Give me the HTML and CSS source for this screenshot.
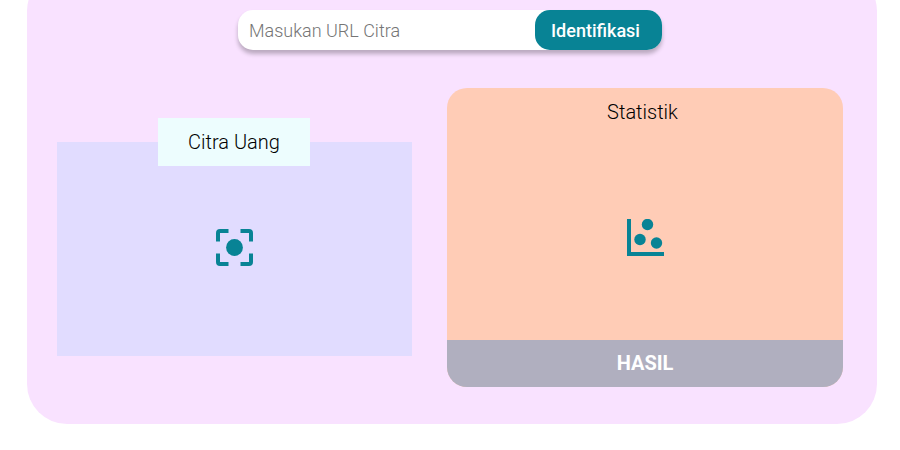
FILE: index.html
```html
<!DOCTYPE html>
<html lang="id">
<head>
<meta charset="utf-8">
<title>Identifikasi Citra Uang</title>
<link rel="stylesheet" href="styles.css">
</head>
<body>
<main class="panel">
  <form class="search">
    <input class="search-input" type="text" placeholder="Masukan URL Citra">
    <button class="search-button" type="button">Identifikasi</button>
  </form>
  <div class="content">
    <section class="image-card">
      <h2 class="image-title">Citra Uang</h2>
      <svg class="icon" viewBox="0 0 37 37"><path d="M0 12.5V4a4 4 0 0 1 4-4h8.5v4H4v8.5zM24.5 0H33a4 4 0 0 1 4 4v8.5h-4V4h-8.5zM0 24.5h4V33h8.5v4H4a4 4 0 0 1-4-4zM33 24.5h4V33a4 4 0 0 1-4 4h-8.5v-4H33z"/><circle cx="18.5" cy="18.5" r="8.4"/></svg>
    </section>
    <section class="stats-card">
      <h2 class="stats-title">Statistik</h2>
      <div class="stats-body">
        <svg class="icon" viewBox="0 0 37 37"><path d="M0 0h4v33h33v4H0z"/><circle cx="20.5" cy="5.5" r="5.7"/><circle cx="13" cy="20.5" r="5.7"/><circle cx="29.5" cy="24" r="5.7"/></svg>
      </div>
      <div class="result">HASIL</div>
    </section>
  </div>
</main>
</body>
</html>
```
FILE: styles.css
```css
* { box-sizing: border-box; }
body { display: flow-root; margin: 0; height: 450px; overflow: hidden; background: #fff; font-family: Roboto, sans-serif; }
.panel { width: 850px; height: 453px; margin: -29px 0 0 27px; padding: 39px 34px 37px 30px; background: #f9e2ff; border-radius: 40px; }
.search { display: flex; width: 424px; height: 40px; margin: 0 0 38px 181px; background: #fff; border-radius: 15px; box-shadow: 0 4px 4px rgba(0,0,0,.25); }
.search-input { flex: 1; min-width: 0; padding: 0 11px; border: 0; background: none; font: 300 18px Roboto, sans-serif; }
.search-input::placeholder { color: #757575; }
.search-button { width: 127px; padding: 0; padding-right: 6px; border: 0; border-radius: 15px; background: #088395; color: #fff; font: 500 18px Roboto, sans-serif; }
.content { display: flex; justify-content: space-between; align-items: flex-start; }
.image-card { display: flex; flex-direction: column; align-items: center; width: 355px; height: 214px; margin-top: 54px; background: #e1dcff; }
.image-title { width: 152px; height: 48px; margin: -24px 1px 63px 0; background: #edfdfe; font-size: 20px; font-weight: 300; line-height: 48px; text-align: center; }
.icon { display: block; width: 37px; height: 37px; fill: #088395; }
.stats-card { display: flex; flex-direction: column; width: 396px; height: 299px; overflow: hidden; border-radius: 20px; background: #ffccb6; }
.stats-title { height: 48px; margin: 0; padding-right: 5px; font-size: 20px; font-weight: 300; line-height: 48px; text-align: center; }
.stats-body { display: flex; flex: 1; justify-content: center; padding-top: 83px; }
.result { height: 47px; background: #b0afbf; color: #fff; font-size: 20px; font-weight: 700; line-height: 47px; text-align: center; }
```
